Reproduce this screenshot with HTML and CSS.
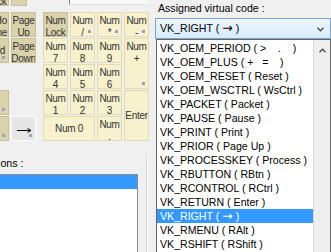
FILE: index.html
```html
<!DOCTYPE html>
<html lang="en">

<head>
    <meta charset="UTF-8">
    <title>Key mapping</title>
    <link rel="stylesheet" href="styles.css">
</head>

<body>
    <div class="dialog">
        <!-- keyboard + options list -->
        <div class="left">
            <div class="fkeys">
                <div class="key dark"><span>Scroll</span><span>Lock</span></div>
                <div class="key dark small"><span class="faint">=</span></div>
                <div class="leds"></div>
            </div>

            <div class="kb">
                <div class="nav">
                    <div class="key dark rt"><span>Ho</span><span>me</span></div>
                    <div class="key dark"><span>Page</span><span>Up</span></div>
                    <div class="key dark mid"><span>End</span><i class="dot"></i></div>
                    <div class="key dark"><span>Page</span><span>Down</span></div>
                    <div></div>
                    <div></div>
                    <div class="key dark"><i class="dot"></i></div>
                    <div></div>
                    <div class="key dark"><i class="dot"></i></div>
                    <div class="key on mid">
                        <svg class="arrow" width="15" height="5" viewBox="0 0 15 5">
                            <line x1="0" y1="2.5" x2="14" y2="2.5" stroke="#000" stroke-width="1"/>
                            <polyline points="10.5,0.5 14,2.5 10.5,4.5" fill="none" stroke="#000" stroke-width="1"/>
                        </svg>
                        <i class="dot"></i>
                    </div>
                </div>

                <div class="num">
                    <div class="key dark"><span>Num</span><span>Lock</span></div>
                    <div class="key"><span>Num</span><span>/</span><i class="dot"></i></div>
                    <div class="key"><span>Num</span><span>*</span><i class="dot"></i></div>
                    <div class="key"><span>Num</span><span>-</span><i class="dot"></i></div>
                    <div class="key"><span>Num</span><span>7</span></div>
                    <div class="key"><span>Num</span><span>8</span></div>
                    <div class="key"><span>Num</span><span>9</span></div>
                    <div class="key tall"><span>Num</span><span>+</span><i class="dot"></i></div>
                    <div class="key"><span>Num</span><span>4</span></div>
                    <div class="key"><span>Num</span><span>5</span></div>
                    <div class="key"><span>Num</span><span>6</span></div>
                    <div class="key"><span>Num</span><span>1</span></div>
                    <div class="key"><span>Num</span><span>2</span></div>
                    <div class="key"><span>Num</span><span>3</span></div>
                    <div class="key tall mid"><span>Enter</span></div>
                    <div class="key wide mid"><span>Num 0</span></div>
                    <div class="key"><span>Num</span><span>.</span></div>
                </div>
            </div>

            <div class="lower">
                <div class="opts">
                    <div class="lbl opts-lbl">Options :</div>
                    <div class="listbox">
                        <div class="lrow sel"></div>
                    </div>
                </div>
                <div class="sep"></div>
            </div>
        </div>

        <!-- virtual code picker -->
        <div class="right">
            <div class="lbl code-lbl">Assigned virtual code :</div>
            <div class="combo">
                <span>VK_RIGHT ( <span class="arr">→</span> )</span>
                <svg class="chev" width="7" height="5" viewBox="0 0 7 5">
                    <polyline points="0.5,0.8 3.5,3.8 6.5,0.8" fill="none" stroke="#4b4b4b" stroke-width="1.4"/>
                </svg>
            </div>

            <div class="drop">
                <ul class="items">
                    <li>VK_OEM_PERIOD ( &gt;&nbsp;&nbsp;&nbsp;&nbsp;.&nbsp;&nbsp;&nbsp; )</li>
                    <li>VK_OEM_PLUS ( +&nbsp;&nbsp;&nbsp;=&nbsp;&nbsp;&nbsp; )</li>
                    <li>VK_OEM_RESET ( Reset )</li>
                    <li>VK_OEM_WSCTRL ( WsCtrl )</li>
                    <li>VK_PACKET ( Packet )</li>
                    <li>VK_PAUSE ( Pause )</li>
                    <li>VK_PRINT ( Print )</li>
                    <li>VK_PRIOR ( Page Up )</li>
                    <li>VK_PROCESSKEY ( Process )</li>
                    <li>VK_RBUTTON ( RBtn )</li>
                    <li>VK_RCONTROL ( RCtrl )</li>
                    <li>VK_RETURN ( Enter )</li>
                    <li class="sel">VK_RIGHT ( <span class="arr">→</span> )</li>
                    <li>VK_RMENU ( RAlt )</li>
                    <li>VK_RSHIFT ( RShift )</li>
                </ul>
                <div class="vscroll">
                    <svg width="7" height="5" viewBox="0 0 7 5">
                        <polyline points="0.5,4.2 3.5,1.2 6.5,4.2" fill="none" stroke="#4b4b4b" stroke-width="1.4"/>
                    </svg>
                </div>
            </div>
        </div>
    </div>
</body>

</html>
```

FILE: styles.css
```css
* {
    box-sizing: border-box;
}

html,
body {
    margin: 0;
}

body {
    width: 331px;
    height: 252px;
    overflow: hidden;
    background: #f0f0f0;
    font-family: "Liberation Sans", Arial, sans-serif;
    font-size: 10.6px;
    color: #000;
}

.dialog {
    display: flex;
    align-items: flex-start;
}

/* --- left side: keyboard --- */

.left {
    flex: none;
    width: 171px;
    margin-left: -16px;
}

.fkeys {
    display: flex;
    align-items: flex-start;
    gap: 2px;
    height: 25px;
    margin-top: -19px;
}

.fkeys .key {
    width: 25px;
    height: 25px;
}

.fkeys .key.small {
    width: 16px;
    justify-content: flex-end;
    padding-bottom: 1px;
}

.faint {
    color: #e9e3c4;
    font-size: 9px;
}

.leds {
    width: 79px;
    height: 24px;
    margin-left: 40px;
    background: #f8f8f8;
    border-left: 1px solid #7c7c7c;
    border-bottom: 1px solid #e2e2e2;
}

.kb {
    display: flex;
    gap: 7px;
    margin-top: 6px;
}

.nav,
.num {
    display: grid;
    grid-template-rows: repeat(5, 25px);
    gap: 1px 2px;
}

.nav {
    grid-template-columns: 25px 25px;
}

.num {
    grid-template-columns: repeat(4, 25px);
}

.key {
    position: relative;
    display: flex;
    flex-direction: column;
    align-items: center;
    padding-top: 2px;
    background: #f7f1cd;
    border: 1px solid #e2dab0;
    color: #333;
    font-size: 10px;
    line-height: 12px;
    letter-spacing: -0.3px;
    white-space: nowrap;
    overflow: hidden;
}

.key.dark {
    background: #dad2aa;
    border-color: #c8c095;
}

.key.on {
    background: #e6e6e6;
    border-color: #fbfbfb;
}

.key.mid {
    justify-content: center;
    padding-top: 0;
}

.key.rt {
    align-items: flex-end;
    padding-right: 1px;
}

.key.tall {
    grid-row: span 2;
}

.key.wide {
    grid-column: span 2;
}

.key .arrow {
    margin-top: 3px;
    margin-left: 1px;
}

.dot {
    position: absolute;
    right: 3px;
    bottom: 3px;
    width: 3px;
    height: 3px;
    background: #a59bc8;
}

/* --- options list under the keyboard --- */

.lower {
    display: flex;
    height: 100px;
    margin-top: 14px;
}

.lbl {
    line-height: 14px;
    white-space: nowrap;
}

.opts-lbl {
    margin-top: 1px;
    margin-left: -3px;
}

.listbox {
    width: 154px;
    height: 90px;
    margin-top: 4px;
    background: #fff;
    border: 1px solid #8e8f93;
}

.lrow {
    height: 14px;
}

.lrow.sel {
    background: #3399ff;
}

.sep {
    width: 2px;
    margin-left: 8px;
    border-left: 1px solid #d6d6d6;
    border-right: 1px solid #fff;
}

/* --- right side: combo + open dropdown --- */

.right {
    position: relative;
    flex: none;
    width: 176px;
}

.code-lbl {
    margin-top: 1px;
    padding-left: 3px;
}

.combo {
    display: flex;
    align-items: center;
    justify-content: space-between;
    height: 21px;
    margin-top: 3px;
    padding: 0 6px 0 4px;
    border: 1px solid #7da2ce;
    background: linear-gradient(#edf6fe, #d7ebfc);
    line-height: 19px;
    white-space: nowrap;
}

.arr {
    font-family: "DejaVu Sans", sans-serif;
    font-size: 12.5px;
    line-height: 10px;
}

.chev {
    margin-top: 2px;
}

.drop {
    position: absolute;
    top: 39px;
    left: 1px;
    right: 0;
    height: 230px;
    display: flex;
    background: #fff;
    border: 1px solid #646464;
}

.items {
    flex: 1;
    margin: 0;
    padding: 1px 0 0 0;
    list-style: none;
}

.items li {
    height: 14px;
    padding-left: 3px;
    line-height: 14px;
    white-space: nowrap;
}

.items li.sel {
    background: #3399ff;
    color: #fff;
}

.vscroll {
    flex: none;
    width: 17px;
    display: flex;
    justify-content: center;
    padding-top: 8px;
    background: #eeeeee;
    border-left: 1px solid #d9d9d9;
}

.vscroll svg {
    margin-left: 1px;
}
```
